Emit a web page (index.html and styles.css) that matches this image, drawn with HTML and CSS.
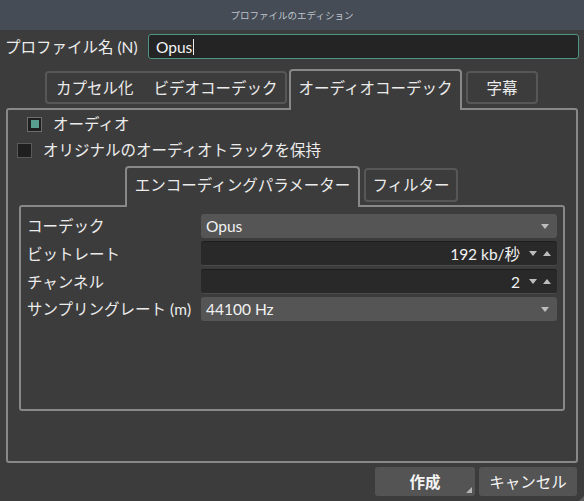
FILE: index.html
```html
<!DOCTYPE html>
<html lang="ja">
<head>
<meta charset="utf-8">
<link rel="stylesheet" href="styles.css">
</head>
<body>
<div class="window">
  <div class="titlebar">プロファイルのエディション</div>
  <div class="name-row">
    <span class="name-label">プロファイル名 (N)</span>
    <div class="name-input">Opus<span class="caret"></span></div>
  </div>
  <div class="tabbar">
    <div class="tab tab-multi"><span>カプセル化</span><span>ビデオコーデック</span></div>
    <div class="tab sel tab-audio">オーディオコーデック</div>
    <div class="tab tab-sub">字幕</div>
  </div>
  <div class="pane">
    <div class="check-row indent">
      <span class="check checked"><span class="check-fill"></span></span>
      <span>オーディオ</span>
    </div>
    <div class="check-row">
      <span class="check"></span>
      <span>オリジナルのオーディオトラックを保持</span>
    </div>
    <div class="inner">
      <div class="tabbar inner-tabbar">
        <div class="tab sel tab-enc">エンコーディングパラメーター</div>
        <div class="tab tab-filter">フィルター</div>
      </div>
      <div class="inner-pane">
        <div class="form">
          <span class="lbl">コーデック</span>
          <div class="combo"><span>Opus</span><span class="tri-down"></span></div>
          <span class="lbl">ビットレート</span>
          <div class="spin"><span class="val">192 kb/秒</span><span class="tri-down"></span><span class="tri-up"></span></div>
          <span class="lbl">チャンネル</span>
          <div class="spin"><span class="val">2</span><span class="tri-down"></span><span class="tri-up"></span></div>
          <span class="lbl">サンプリングレート (m)</span>
          <div class="combo"><span>44100 Hz</span><span class="tri-down"></span></div>
        </div>
      </div>
    </div>
  </div>
  <div class="buttons">
    <div class="btn btn-create">作成</div>
    <div class="btn btn-cancel">キャンセル</div>
  </div>
  <div class="grip"></div>
</div>
</body>
</html>
```

FILE: styles.css
```css
html, body {
  margin: 0;
  padding: 0;
  background: #3c3c3c;
}
.window {
  width: 584px;
  height: 501px;
  background: #3c3c3c;
  color: #ececec;
  font-family: "Lato", "Noto Sans CJK JP", sans-serif;
  font-size: 15.5px;
  line-height: 20px;
  position: relative;
  overflow: hidden;
}
.titlebar {
  height: 30px;
  background: #464c55;
  color: #bfc6ce;
  font-family: "Noto Sans CJK JP", sans-serif;
  font-size: 9.5px;
  display: flex;
  align-items: center;
  justify-content: center;
}
.name-row {
  display: flex;
  align-items: center;
  margin-top: 4px;
  padding: 0 5px;
  height: 25px;
}
.name-input {
  margin-left: auto;
  width: 431px;
  height: 25px;
  box-sizing: border-box;
  border: 1px solid #4f9484;
  border-radius: 3px;
  background: #242424;
  padding-left: 7px;
  display: flex;
  align-items: center;
  color: #f4f4f4;
}
.caret {
  display: inline-block;
  width: 1px;
  height: 16px;
  background: #eee;
  margin-left: 1px;
}
.tabbar {
  display: flex;
  align-items: flex-end;
  margin-top: 10px;
  padding-left: 45px;
}
.tab {
  box-sizing: border-box;
  height: 33px;
  border: 2px solid #575757;
  border-radius: 4px;
  margin-bottom: 4px;
  display: flex;
  align-items: center;
  justify-content: center;
  background: #3c3c3c;
}
.tab.sel {
  height: 41px;
  border-color: #888888;
  border-bottom: none;
  border-radius: 4px 4px 0 0;
  margin-bottom: -2px;
  position: relative;
  z-index: 1;
  padding-bottom: 6px;
}
.tab-multi {
  width: 242px;
  justify-content: flex-start;
  padding-left: 9px;
  gap: 20px;
}
.tab-audio {
  width: 173px;
  margin-left: 2px;
}
.tab-sub {
  width: 72px;
  margin-left: 4px;
}
.pane {
  margin: 0 6px;
  height: 355px;
  box-sizing: border-box;
  border: 2px solid #888888;
  border-radius: 3px;
  padding-top: 6px;
}
.check-row {
  display: flex;
  align-items: center;
  height: 16px;
  gap: 11px;
  padding-left: 9px;
  margin-bottom: 10px;
}
.check-row.indent {
  padding-left: 19px;
}
.check {
  width: 15px;
  height: 15px;
  box-sizing: border-box;
  border: 1px solid #5a5a5a;
  background: #1f1f1f;
  display: flex;
  align-items: center;
  justify-content: center;
  flex: none;
}
.check.checked {
  border-color: #6e6e6e;
}
.check-fill {
  width: 8px;
  height: 8px;
  background: #5a9e8f;
}
.inner {
  padding: 0 11px;
  margin-top: -2px;
}
.inner-tabbar {
  margin-top: 0;
  padding-left: 106px;
}
.tab-enc {
  width: 235px;
  height: 39px;
  padding-bottom: 4px;
}
.tab-filter {
  width: 94px;
  height: 34px;
  margin-left: 4px;
  margin-bottom: 3px;
}
.inner-pane {
  height: 206px;
  box-sizing: border-box;
  border: 2px solid #888888;
  border-radius: 3px;
  padding: 7px 6px 0 6px;
}
.form {
  display: grid;
  grid-template-columns: 174px 356px;
  grid-template-rows: 24px 25px 25px 24px;
  row-gap: 3px;
  align-items: center;
}
.lbl {
  white-space: nowrap;
}
.combo {
  height: 24px;
  box-sizing: border-box;
  background: #555555;
  border-radius: 3px;
  display: flex;
  align-items: center;
  padding-left: 5px;
  padding-right: 8px;
  color: #f2f2f2;
}
.combo .tri-down {
  margin-left: auto;
}
.spin {
  height: 25px;
  box-sizing: border-box;
  background: #292929;
  border-top: 1px solid #1d1d1d;
  border-bottom: 1px solid #4b4b4b;
  border-radius: 3px;
  display: flex;
  align-items: center;
  justify-content: flex-end;
  padding-right: 6px;
  color: #f2f2f2;
}
.spin .val {
  margin-right: 9px;
}
.spin .tri-up {
  margin-left: 6px;
}
.tri-down {
  width: 0;
  height: 0;
  border-left: 4px solid transparent;
  border-right: 4px solid transparent;
  border-top: 5px solid #bdbdbd;
}
.tri-up {
  width: 0;
  height: 0;
  border-left: 4px solid transparent;
  border-right: 4px solid transparent;
  border-bottom: 5px solid #bdbdbd;
}
.buttons {
  display: flex;
  justify-content: flex-end;
  gap: 4px;
  margin-top: 4px;
  padding-right: 7px;
}
.btn {
  height: 29px;
  box-sizing: border-box;
  background: #545454;
  border-radius: 3px;
  display: flex;
  align-items: center;
  justify-content: center;
  color: #f4f4f4;
  position: relative;
}
.btn-create {
  width: 100px;
  font-weight: bold;
}
.btn-create::after {
  content: "";
  position: absolute;
  right: 3px;
  bottom: 3px;
  width: 0;
  height: 0;
  border-left: 6px solid transparent;
  border-bottom: 6px solid #b4b4b4;
}
.btn-cancel {
  width: 98px;
}
.grip {
  position: absolute;
  right: 0;
  bottom: 0;
  width: 0;
  height: 0;
  border-left: 5px solid transparent;
  border-bottom: 5px solid #5e5e5e;
}
```
